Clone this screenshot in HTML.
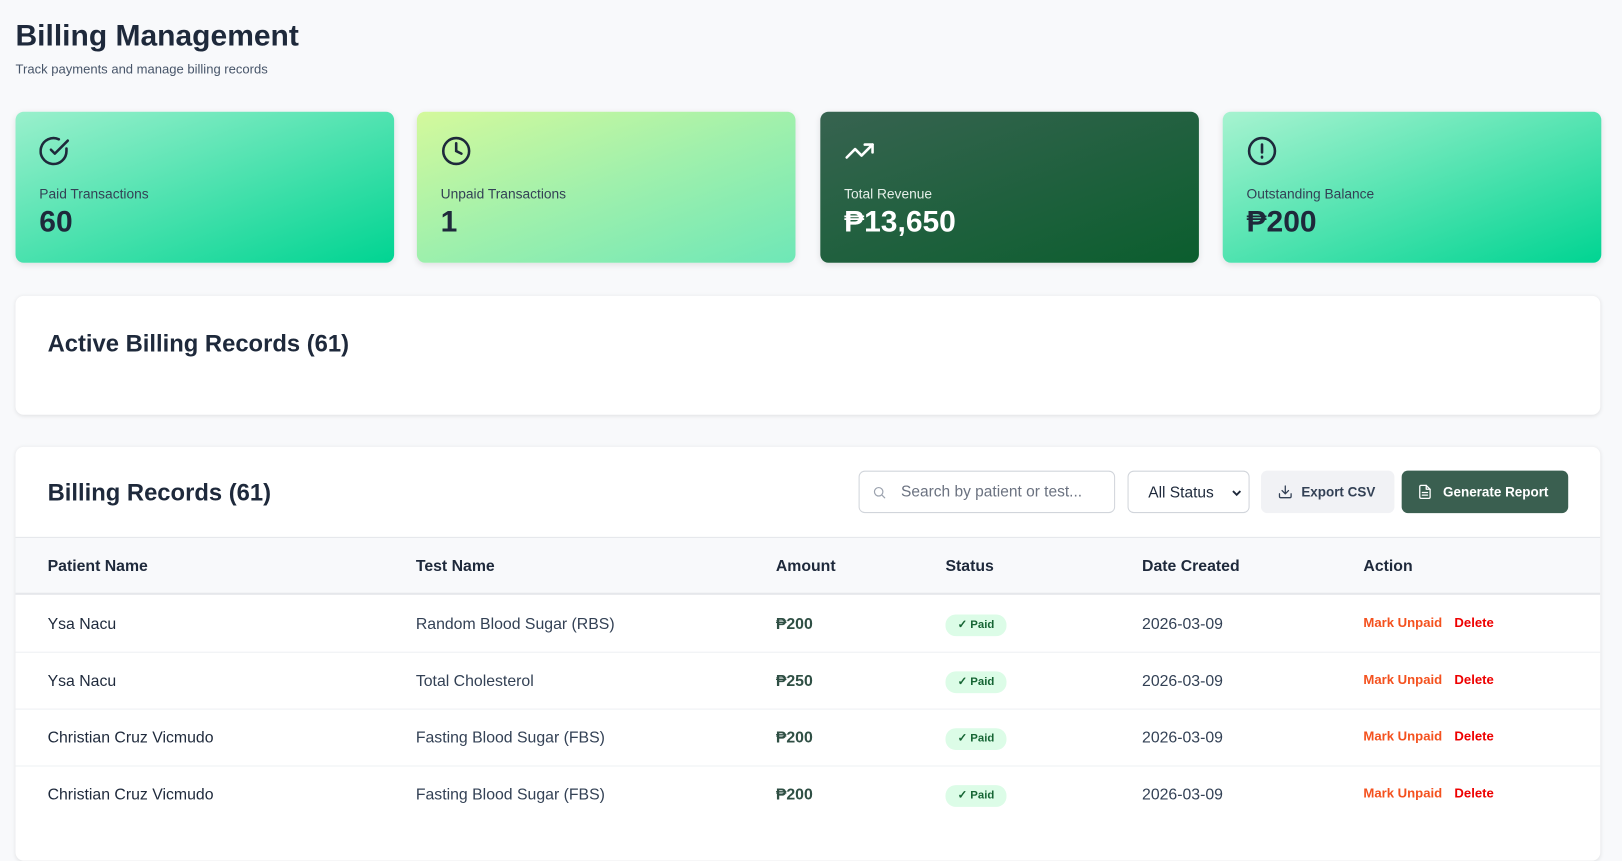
<!DOCTYPE html>
<html><head><meta charset="utf-8"><style>
*{box-sizing:border-box;margin:0;padding:0}
body{width:1622px;height:811px;overflow:hidden;background:#f8f9fb;font-family:"Liberation Sans",sans-serif;color:#1e293b}
#w{position:relative;width:1568px;height:784px;transform:scale(1.03444);transform-origin:0 0}
.abs{position:absolute}
h1{position:absolute;left:15px;top:19px;font-size:29px;font-weight:700;color:#1e293b}
.sub{left:15px;top:60px;font-size:12.6px;color:#475569}
.card{position:absolute;top:108px;width:366px;height:146px;border-radius:8px;box-shadow:0 2px 6px rgba(0,0,0,.1)}
.card svg{position:absolute;left:23px;top:23px}
.card .l{position:absolute;left:23px;top:72px;font-size:13.3px;color:#334155}
.card .v{position:absolute;left:23px;top:91px;font-size:29px;font-weight:700;color:#1e293b}
.panel{position:absolute;left:15px;width:1532px;background:#fff;border-radius:8px;box-shadow:0 1px 4px rgba(0,0,0,.1)}
.th,.td{position:absolute;font-size:15.3px}
.th{font-weight:700;color:#1e293b;top:539px}
.td{color:#334155}
.pill{position:absolute;left:914px;width:59px;height:21px;border-radius:10px;background:#dcfce7;color:#166534;font-size:11px;font-weight:700;text-align:center;line-height:21px}
.mu{position:absolute;left:1318px;font-size:12.7px;font-weight:700;color:#f4511e}
.de{position:absolute;left:1406px;font-size:12.7px;font-weight:700;color:#e00}
.line{position:absolute;left:15px;width:1532px;height:1px;background:#eef0f3}
</style></head><body><div id="w">
<h1>Billing Management</h1>
<div class="abs sub">Track payments and manage billing records</div>

<div class="card" style="left:15px;background:linear-gradient(160deg,#9af0cc,#00d492)">
<svg width="30" height="30" viewBox="0 0 24 24" fill="none" stroke="#1e293b" stroke-width="2" stroke-linecap="round" stroke-linejoin="round"><path d="M21 10.1V12a10 10 0 1 1-5.9-9.1"/><path d="M9 11l3 3L22 4"/></svg>
<div class="l">Paid Transactions</div><div class="v">60</div></div>
<div class="card" style="left:403px;background:linear-gradient(160deg,#d4f99c,#9ff0ac 50%,#6ee7b7)">
<svg width="30" height="30" viewBox="0 0 24 24" fill="none" stroke="#1e293b" stroke-width="2" stroke-linecap="round"><circle cx="12" cy="12" r="10"/><path d="M12 6v6l4 2"/></svg>
<div class="l">Unpaid Transactions</div><div class="v">1</div></div>
<div class="card" style="left:793px;background:linear-gradient(160deg,#376350,#0b5e2e)">
<svg width="30" height="30" viewBox="0 0 24 24" fill="none" stroke="#fff" stroke-width="2" stroke-linecap="round" stroke-linejoin="round"><path d="M22 7l-8.5 8.5-5-5L2 17"/><path d="M16 7h6v6"/></svg>
<div class="l" style="color:#e5efe9">Total Revenue</div><div class="v" style="color:#fff">₱13,650</div></div>
<div class="card" style="left:1182px;background:linear-gradient(160deg,#a7f3d0,#00d492)">
<svg width="30" height="30" viewBox="0 0 24 24" fill="none" stroke="#1e293b" stroke-width="2" stroke-linecap="round"><circle cx="12" cy="12" r="10"/><path d="M12 7v6M12 16.5v.5"/></svg>
<div class="l">Outstanding Balance</div><div class="v">₱200</div></div>

<div class="panel" style="top:286px;height:115px"><div class="abs" style="left:31px;top:33px;font-size:23px;font-weight:700">Active Billing Records (61)</div></div>

<div class="panel" style="top:432px;height:400px;overflow:hidden">
<div class="abs" style="left:31px;top:31px;font-size:23px;font-weight:700">Billing Records (61)</div>
<div class="abs" style="left:0;top:87px;width:1532px;height:56px;background:#f8f9fb;border-top:1px solid #e5e7eb;border-bottom:2px solid #e5e7eb"></div>
</div>
<div class="abs" style="left:830px;top:455px;width:248px;height:41px;border:1px solid #d1d5db;border-radius:6px;background:#fff">
<svg class="abs" style="left:12px;top:13px" width="14" height="14" viewBox="0 0 24 24" fill="none" stroke="#9ca3af" stroke-width="2" stroke-linecap="round"><circle cx="11" cy="11" r="7"/><path d="M21 21l-5-5"/></svg>
<div class="abs" style="left:40px;top:11px;font-size:15px;color:#6b7280">Search by patient or test...</div></div>
<div class="abs" style="left:1090px;top:455px;width:118px;height:41px;border:1px solid #d1d5db;border-radius:6px;background:#fff">
<div class="abs" style="left:19px;top:12px;font-size:15px;color:#1e293b">All Status</div>
<svg class="abs" style="left:100px;top:16px" width="9" height="9" viewBox="0 0 10 10" fill="none" stroke="#1e293b" stroke-width="2"><path d="M1 3l4 4 4-4"/></svg></div>
<div class="abs" style="left:1219px;top:455px;width:129px;height:41px;border-radius:6px;background:#f1f2f5">
<svg class="abs" style="left:16px;top:13px" width="15" height="15" viewBox="0 0 24 24" fill="none" stroke="#334155" stroke-width="2" stroke-linecap="round" stroke-linejoin="round"><path d="M21 15v4a2 2 0 0 1-2 2H5a2 2 0 0 1-2-2v-4M7 10l5 5 5-5M12 15V3"/></svg>
<div class="abs" style="left:39px;top:13px;font-size:13px;font-weight:700;color:#334155">Export CSV</div></div>
<div class="abs" style="left:1355px;top:455px;width:161px;height:41px;border-radius:6px;background:#3a5f50">
<svg class="abs" style="left:15px;top:13px" width="15" height="15" viewBox="0 0 24 24" fill="none" stroke="#fff" stroke-width="2" stroke-linecap="round" stroke-linejoin="round"><path d="M14 2H6a2 2 0 0 0-2 2v16a2 2 0 0 0 2 2h12a2 2 0 0 0 2-2V8z"/><path d="M14 2v6h6M16 13H8M16 17H8"/></svg>
<div class="abs" style="left:40px;top:13px;font-size:13px;font-weight:700;color:#fff">Generate Report</div></div>

<div class="th" style="left:46px">Patient Name</div>
<div class="th" style="left:402px">Test Name</div>
<div class="th" style="left:750px">Amount</div>
<div class="th" style="left:914px">Status</div>
<div class="th" style="left:1104px">Date Created</div>
<div class="th" style="left:1318px">Action</div>

<div class="td" style="left:46px;top:595px;color:#1e293b">Ysa Nacu</div><div class="td" style="left:402px;top:595px">Random Blood Sugar (RBS)</div><div class="td" style="left:750px;top:595px;font-weight:700;color:#2f4f44">₱200</div><div class="pill" style="top:594px">✓ Paid</div><div class="td" style="left:1104px;top:595px">2026-03-09</div><div class="mu" style="top:595px">Mark Unpaid</div><div class="de" style="top:595px">Delete</div>
<div class="line" style="top:630px"></div>
<div class="td" style="left:46px;top:650px;color:#1e293b">Ysa Nacu</div><div class="td" style="left:402px;top:650px">Total Cholesterol</div><div class="td" style="left:750px;top:650px;font-weight:700;color:#2f4f44">₱250</div><div class="pill" style="top:649px">✓ Paid</div><div class="td" style="left:1104px;top:650px">2026-03-09</div><div class="mu" style="top:650px">Mark Unpaid</div><div class="de" style="top:650px">Delete</div>
<div class="line" style="top:685px"></div>
<div class="td" style="left:46px;top:705px;color:#1e293b">Christian Cruz Vicmudo</div><div class="td" style="left:402px;top:705px">Fasting Blood Sugar (FBS)</div><div class="td" style="left:750px;top:705px;font-weight:700;color:#2f4f44">₱200</div><div class="pill" style="top:704px">✓ Paid</div><div class="td" style="left:1104px;top:705px">2026-03-09</div><div class="mu" style="top:705px">Mark Unpaid</div><div class="de" style="top:705px">Delete</div>
<div class="line" style="top:740px"></div>
<div class="td" style="left:46px;top:760px;color:#1e293b">Christian Cruz Vicmudo</div><div class="td" style="left:402px;top:760px">Fasting Blood Sugar (FBS)</div><div class="td" style="left:750px;top:760px;font-weight:700;color:#2f4f44">₱200</div><div class="pill" style="top:759px">✓ Paid</div><div class="td" style="left:1104px;top:760px">2026-03-09</div><div class="mu" style="top:760px">Mark Unpaid</div><div class="de" style="top:760px">Delete</div>
</div></body></html>
